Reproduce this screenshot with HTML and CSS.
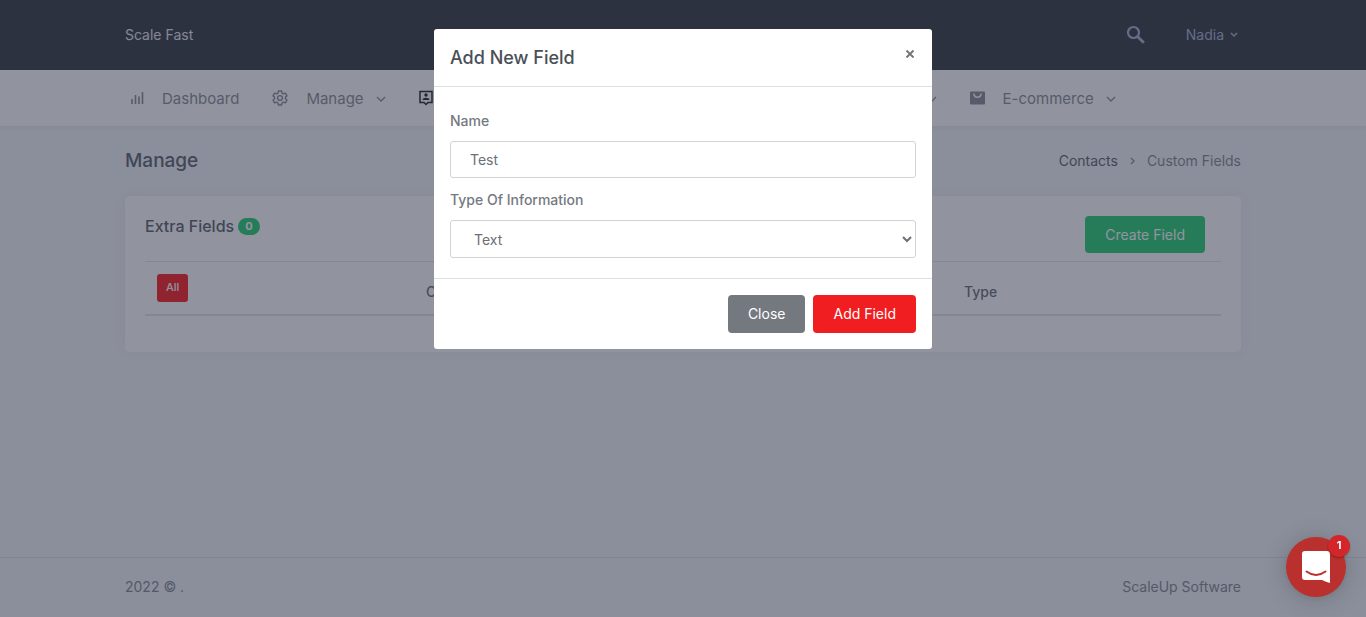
FILE: index.html
```html
<!DOCTYPE html>
<html lang="en">
<head>
<meta charset="utf-8">
<meta name="viewport" content="width=device-width, initial-scale=1">
<title>Custom Fields</title>
<link rel="stylesheet" href="styles.css">
</head>
<body>
<div class="page">
  <header class="topbar">
    <div class="container topbar-row">
      <a class="brand" href="#">Scale Fast</a>
      <div class="topbar-tools">
        <button class="tool" type="button" aria-label="Search">
          <svg width="20" height="20" viewBox="0 0 20 20" fill="none" stroke="currentColor"><circle cx="7.5" cy="7.5" r="5.5" stroke-width="2.2"/><path d="M11.8 11.8l6 6" stroke-width="2.8"/></svg>
        </button>
        <button class="tool user" type="button">Nadia
          <svg width="8" height="6" viewBox="0 0 8 6" fill="none" stroke="currentColor" stroke-width="1.5"><path d="M1 1l3 3 3-3"/></svg>
        </button>
      </div>
    </div>
  </header>
  <nav class="mainnav">
    <div class="container nav-row">
      <a class="nav-item" href="#">
        <svg width="13" height="14" viewBox="0 0 13 14" fill="none" stroke="currentColor" stroke-width="1.6"><path d="M1 8v5M4.500 4v9M8 5.500V13M11.500 1v12"/></svg>
        <span>Dashboard</span>
      </a>
      <a class="nav-item" href="#">
        <svg width="16" height="16" viewBox="0 0 16 16" fill="none" stroke="currentColor" stroke-width="1.4" stroke-linejoin="round"><path d="M6.4 1h3.2l.5 2.1 1.3.8 2-.7L15 5.900l-1.600 1.400v1.500l1.600 1.400-1.600 2.700-2-.7-1.300.8-.5 2H6.400l-.5-2-1.300-.8-2 .7L1 10.200l1.600-1.400V7.300L1 5.900l1.600-2.700 2 .7 1.300-.8z"/><circle cx="8" cy="8" r="2.400"/></svg>
        <span>Manage</span>
        <svg width="10" height="6" viewBox="0 0 10 6" fill="none" stroke="currentColor" stroke-width="1.3"><path d="M1 1l4 4 4-4"/></svg>
      </a>
      <a class="nav-item wide" href="#" aria-label="Contacts">
        <svg class="dark" width="14" height="16" viewBox="0 0 14 16" fill="none" stroke="currentColor" stroke-width="1.5"><path d="M1 1.500h12v11H9l-2 2-2-2H1z"/><circle cx="7" cy="5" r="1.700" fill="currentColor" stroke="none"/><path d="M3.500 10c0-3 7-3 7 0z" fill="currentColor" stroke="none"/></svg>
        <svg width="10" height="6" viewBox="0 0 10 6" fill="none" stroke="currentColor" stroke-width="1.3"><path d="M1 1l4 4 4-4"/></svg>
      </a>
      <a class="nav-item" href="#">
        <svg width="15" height="14" viewBox="0 0 15 14"><path fill="currentColor" fill-rule="evenodd" d="M1 .5h13q1 0 1 1v11q0 1-1 1H1q-1 0-1-1v-11q0-1 1-1zM3 2.500q.5 4.500 4.500 4.500T12 2.500h-1.500Q10 5.500 7.500 5.500T4.500 2.500z"/></svg>
        <span>E-commerce</span>
        <svg width="10" height="6" viewBox="0 0 10 6" fill="none" stroke="currentColor" stroke-width="1.3"><path d="M1 1l4 4 4-4"/></svg>
      </a>
    </div>
  </nav>
  <main class="container content">
    <div class="title-row">
      <h1>Manage</h1>
      <div class="crumbs">
        <a href="#">Contacts</a>
        <svg width="5" height="8" viewBox="0 0 5 8" fill="none" stroke="currentColor" stroke-width="1.3"><path d="M1 1l3 3-3 3"/></svg>
        <span>Custom Fields</span>
      </div>
    </div>
    <section class="card">
      <div class="card-head">
        <h2>Extra Fields <span class="count">0</span></h2>
        <button class="btn create" type="button">Create Field</button>
      </div>
      <table class="fields">
        <thead>
          <tr>
            <th class="col-all"><button class="all" type="button">All</button></th>
            <th class="col-name">Custom Field</th>
            <th>Type</th>
          </tr>
        </thead>
      </table>
    </section>
  </main>
  <footer class="footer">
    <div class="container footer-row"><span>2022 © .</span><span>ScaleUp Software</span></div>
  </footer>
</div>

<div class="backdrop">
  <form class="modal" role="dialog" aria-modal="true" aria-labelledby="modal-title">
    <div class="modal-head">
      <h2 id="modal-title">Add New Field</h2>
      <button class="close" type="button" aria-label="Close dialog"><svg width="8" height="8" viewBox="0 0 8 8" fill="none" stroke="currentColor" stroke-width="2"><path d="M.5.5l7 7M7.500.5l-7 7"/></svg></button>
    </div>
    <div class="modal-body">
      <label for="field-name">Name</label>
      <input class="control" id="field-name" type="text" value="Test">
      <label for="field-type">Type Of Information</label>
      <select class="control select" id="field-type"><option>Text</option></select>
    </div>
    <div class="modal-foot">
      <button class="btn grey" type="button">Close</button>
      <button class="btn red" type="button">Add Field</button>
    </div>
  </form>
</div>

<button class="chat" type="button" aria-label="Open chat">
  <svg width="28" height="32" viewBox="0 0 28 32"><path fill="#fff" d="M3 0h22q3 0 3 3v29q-4-1-8-3H3q-3 0-3-3V3q0-3 3-3z"/><path d="M4.500 20.500q9.500 7 19 0" fill="none" stroke="#b9302e" stroke-width="2" stroke-linecap="round"/></svg>
  <span class="chat-count">1</span>
</button>
</body>
</html>
```
FILE: styles.css
```css
* { box-sizing: border-box; }

body {
  margin: 0;
  font-family: Inter, "Liberation Sans", sans-serif;
  font-size: 14px;
  line-height: 20px;
  color: #86898f;
  background: #f3f4f6;
}

a { color: inherit; text-decoration: none; }
button, input, select { font: inherit; color: inherit; }
button { border: 0; cursor: pointer; }
svg { display: block; flex: none; }
h1, h2 { margin: 0; font-weight: 500; color: #5d636d; }

.page { min-height: 100vh; display: flex; flex-direction: column; }
.container { width: 100%; max-width: 1140px; margin: 0 auto; padding: 0 12px; }

.topbar { background: #373a43; }
.topbar-row { height: 70px; display: flex; align-items: center; justify-content: space-between; }
.brand { color: #e4e5e8; }
.topbar-tools { display: flex; gap: 40px; padding-right: 3px; }
.tool { display: flex; align-items: center; gap: 6px; padding: 0; background: none; color: #a6b0cf; }

.mainnav { background: #fff; box-shadow: 0 2px 4px rgba(40, 45, 60, .06); }
.nav-row { height: 56px; display: flex; align-items: center; gap: 33px; padding: 2px 18px 0; }
.nav-item { display: flex; align-items: center; gap: 18px; font-size: 15px; color: #8b8d92; }
.nav-item > svg:first-child { margin-bottom: 2px; }
.nav-item span + svg { margin-left: -6px; }
.nav-item.wide { flex: 0 0 518px; justify-content: space-between; }
.dark { color: #23242a; }

.content { flex: 1; }
.title-row { height: 70px; display: flex; align-items: center; justify-content: space-between; }
h1 { font-size: 19px; }
.crumbs { display: flex; align-items: center; gap: 12px; }
.crumbs a { color: #5d636d; }

.card { background: #fff; border-radius: 5px; padding: 20px 20px 36px; box-shadow: 0 0 13px rgba(60, 40, 70, .05); }
.card-head { display: flex; align-items: flex-start; justify-content: space-between; padding-right: 16px; margin-bottom: 8px; }
.card-head h2 { display: flex; align-items: center; gap: 4px; font-size: 16px; line-height: 18px; }
.count { margin-top: 2px; padding: 0 7px; border-radius: 9px; background: #29cc72; color: #fff; font-size: 11px; line-height: 17px; font-weight: 700; }

.btn { height: 38px; padding: 0 20px; border-radius: 4px; color: #fff; font-size: 14px; font-weight: 400; }
.create { height: 37px; background: #29cc72; }
.grey { background: #74797f; }
.red { background: #f01e20; }

.fields { width: 100%; border-collapse: collapse; table-layout: fixed; border-top: 1px solid #e2e4e9; border-bottom: 2px solid #e2e4e9; }
.fields th { height: 53px; padding: 8px 12px 0; text-align: left; font-weight: 500; color: #6b6f78; }
.fields .col-all { width: 25%; padding-top: 0; }
.col-name { width: 50%; }
.all { display: block; height: 28px; padding: 0 9px 2px; border-radius: 3px; background: #fb1e21; color: #fff; font-size: 11px; }

.footer { border-top: 1px solid #dfe1e5; }
.footer-row { height: 59px; padding-bottom: 2px; display: flex; align-items: center; justify-content: space-between; }

.backdrop { position: fixed; inset: 0; padding: 29px 16px; background: rgba(35, 42, 63, .5); }
.modal { width: 100%; max-width: 498px; margin: 0 auto; background: #fff; border-radius: 3px; color: #74797f; }
.modal-head { display: flex; justify-content: space-between; align-items: flex-start; padding: 18px 16px; border-bottom: 1px solid #dddfe8; }
.modal-head h2 { font-size: 18px; line-height: 21px; color: #495057; }
.close { padding: 3px 2px; background: none; color: #777; }
.modal-body { padding: 24px 16px 20px; display: grid; }
.modal-body label { font-weight: 500; margin-bottom: 10px; }
.control { width: 100%; height: 37px; padding: 0 19px; border: 1px solid #ced4da; border-radius: 3px; background: #fff; color: #6b7077; }
.control + label { margin-top: 12px; }
.select { height: 38px; padding: 0 0 0 19px; }
.modal-foot { display: flex; justify-content: flex-end; gap: 8px; padding: 16px; border-top: 1px solid #dddfe8; }

.chat { position: fixed; right: 20px; bottom: 20px; width: 60px; height: 60px; padding: 0; display: grid; place-items: center; border-radius: 50%; background: #b9302e; box-shadow: 0 1px 6px rgba(0, 0, 0, .08), 0 2px 24px rgba(0, 0, 0, .18); }
.chat-count { position: absolute; top: -2px; right: -4px; width: 22px; height: 22px; border-radius: 50%; background: #d3262a; color: #fff; font-size: 11px; font-weight: 700; line-height: 21px; box-shadow: 0 1px 2px rgba(0, 0, 0, .3); }
```
